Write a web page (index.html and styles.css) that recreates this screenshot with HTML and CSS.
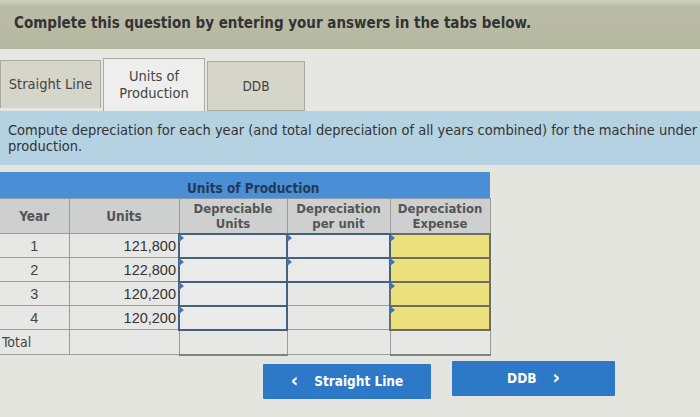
FILE: index.html
```html
<!DOCTYPE html>
<html>
<head>
<meta charset="utf-8">
<link rel="stylesheet" href="styles.css">
</head>
<body>
<div class="page">
  <div class="header">Complete this question by entering your answers in the tabs below.</div>
  <div class="tabs">
    <div class="tab">Straight Line</div>
    <div class="tab active">Units of<br>Production</div>
    <div class="tab ddb">DDB</div>
  </div>
  <div class="instructions"><p class="instr-text">Compute depreciation for each year (and total depreciation of all years combined) for the machine under units of production.</p></div>
  <div class="content">
    <table class="grid">
      <colgroup>
        <col class="c-year"><col class="c-units"><col class="c-dep"><col class="c-per"><col class="c-exp">
      </colgroup>
      <tr class="band">
        <td colspan="2" class="band-cell"></td>
        <td colspan="3" class="band-cell band-title">Units of Production</td>
      </tr>
      <tr class="head">
        <th>Year</th>
        <th>Units</th>
        <th class="two">Depreciable<br>Units</th>
        <th class="two">Depreciation<br>per unit</th>
        <th class="two">Depreciation<br>Expense</th>
      </tr>
      <tr class="row">
        <td class="num-c">1</td><td class="num-r">121,800</td>
        <td class="input"><span class="flag"></span></td>
        <td class="input"><span class="flag"></span></td>
        <td class="input yellow"><span class="flag"></span></td>
      </tr>
      <tr class="row">
        <td class="num-c">2</td><td class="num-r">122,800</td>
        <td class="input"><span class="flag"></span></td>
        <td class="input"><span class="flag"></span></td>
        <td class="input yellow"><span class="flag"></span></td>
      </tr>
      <tr class="row">
        <td class="num-c">3</td><td class="num-r">120,200</td>
        <td class="input"><span class="flag"></span></td>
        <td class="plain"></td>
        <td class="input yellow"><span class="flag"></span></td>
      </tr>
      <tr class="row">
        <td class="num-c">4</td><td class="num-r">120,200</td>
        <td class="input"><span class="flag"></span></td>
        <td class="plain"></td>
        <td class="input yellow"><span class="flag"></span></td>
      </tr>
      <tr class="row total">
        <td class="label">Total</td><td class="plain"></td>
        <td class="plain boxed"></td>
        <td class="plain"></td>
        <td class="plain boxed"></td>
      </tr>
    </table>
    <div class="nav">
      <button class="btn prev"><span class="chev">&lsaquo;</span>Straight Line</button>
      <button class="btn next">DDB<span class="chev">&rsaquo;</span></button>
    </div>
  </div>
</div>
</body>
</html>
```
FILE: styles.css
```css
html, body {
  margin: 0;
  padding: 0;
}
body {
  width: 700px;
  height: 417px;
  overflow: hidden;
  background: #e5e5df;
  font-family: "DejaVu Sans Condensed", "Liberation Sans", sans-serif;
  color: #333;
}
.page {
  width: 700px;
  height: 417px;
  overflow: hidden;
}
.header {
  height: 49px;
  box-sizing: border-box;
  padding: 14px 0 0 14px;
  background: linear-gradient(#cfd1c3 0, #babca7 7px, #b5b8a1 100%);
  font-weight: bold;
  font-size: 15px;
  color: #333;
  white-space: nowrap;
}
.tabs {
  height: 62px;
  box-sizing: border-box;
  padding-top: 8px;
  background: #e6e6e2;
  display: flex;
  align-items: flex-end;
  gap: 2px;
}
.tab {
  width: 101px;
  height: 48px;
  box-sizing: border-box;
  background: #d5d5ca;
  border: 1px solid #a9aaa0;
  border-bottom: none;
  display: flex;
  align-items: center;
  justify-content: center;
  text-align: center;
  font-size: 14.5px;
  line-height: 17px;
  color: #444;
  margin-bottom: 3px;
}
.tab.active {
  background: #eeefed;
  height: 53px;
  margin-bottom: 0;
  width: 102px;
}
.tab.ddb {
  width: 98px;
  height: 50px;
  margin-bottom: 0;
  border-bottom: 1px solid #a9aaa0;
  font-size: 13.5px;
}
.instructions {
  height: 54px;
  box-sizing: border-box;
  padding: 11px 0 0 8px;
  background: #b5d2e2;
  overflow: hidden;
}
.instr-text {
  margin: 0;
  width: 760px;
  font-size: 14.5px;
  line-height: 16px;
  color: #333;
}
.content {
  padding-top: 7px;
}
.grid {
  border-collapse: collapse;
  table-layout: fixed;
  width: 490px;
  font-size: 13.5px;
}
.c-year { width: 69px; }
.c-units { width: 110px; }
.c-dep { width: 108px; }
.c-per { width: 103px; }
.c-exp { width: 100px; }
.grid td, .grid th {
  padding: 0;
  border: 1px solid #9a9c9a;
}
.grid .band-cell {
  height: 24px;
  background: #4a8fd5;
  border: none;
  border-bottom: 1px solid #8b9aa8;
}
.grid .band-title {
  font-weight: bold;
  color: #233a55;
  font-size: 13.5px;
  padding-left: 8px;
  vertical-align: bottom;
  padding-bottom: 2px;
}
.head th {
  height: 35px;
  box-sizing: border-box;
  background: #cdd0cf;
  color: #555;
  font-size: 13.5px;
  line-height: 14px;
  font-weight: bold;
  vertical-align: middle;
}
.head th:first-child {
  border-left: none;
}
.head th.two {
  vertical-align: top;
  padding-top: 2px;
  font-size: 13px;
  line-height: 15px;
}
.row td {
  height: 22px;
  background: #e7e8e6;
}
.row .num-c {
  text-align: center;
  color: #444;
  border-left: none;
  font-family: "Liberation Sans", sans-serif;
  font-size: 14.5px;
}
.row .num-r {
  text-align: right;
  padding-right: 2px;
  color: #333;
  font-family: "Liberation Sans", sans-serif;
  font-size: 14.5px;
}
.row .input {
  position: relative;
  background: #e9eae9;
  border: 2px solid #45607f;
}
.row .input.yellow {
  background: #ebe07c;
  border: 2px solid #6b6d63;
}
.flag {
  position: absolute;
  left: -1px;
  top: -1px;
  width: 0;
  height: 0;
  border-top: 4px solid transparent;
  border-bottom: 4px solid transparent;
  border-left: 5px solid #3f74b8;
}
.row.total td {
  height: 23px;
}
.row .label {
  text-align: left;
  padding-left: 2px;
  color: #444;
  border-left: none;
  font-size: 14px;
}
.row .boxed {
  border-bottom: 2px solid #808280;
}
.nav {
  display: flex;
  align-items: flex-start;
  gap: 21px;
  margin-top: 5px;
  margin-left: 263px;
}
.btn {
  height: 35px;
  border: none;
  border-radius: 1px;
  background: #2e78c8;
  color: #fff;
  font-family: "DejaVu Sans Condensed", "Liberation Sans", sans-serif;
  font-weight: bold;
  font-size: 13.5px;
  display: flex;
  align-items: center;
  justify-content: center;
  padding: 0;
}
.btn.prev {
  width: 168px;
  margin-top: 3px;
}
.btn.next {
  width: 163px;
}
.chev {
  font-size: 20px;
  line-height: 20px;
  margin-top: -3px;
}
.prev .chev {
  margin-right: 16px;
}
.next .chev {
  margin-left: 16px;
}
```
